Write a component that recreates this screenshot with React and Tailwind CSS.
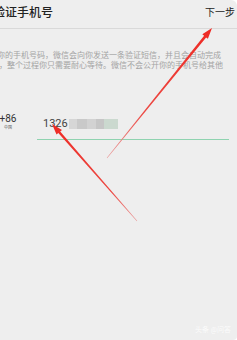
import React from 'react';

const cjk = { fontFamily: 'Roboto, "Noto Sans CJK SC", sans-serif' };

// tapered arrow polygon from tail to tip
const arrowPoints = (tail, tip) => {
  const dx = tip[0] - tail[0];
  const dy = tip[1] - tail[1];
  const len = Math.hypot(dx, dy);
  const ux = dx / len;
  const uy = dy / len;
  const nx = -uy;
  const ny = ux;
  const head = 11;
  const bx = tip[0] - ux * head;
  const by = tip[1] - uy * head;
  const p = (x, y, w) => `${(x + nx * w).toFixed(1)},${(y + ny * w).toFixed(1)}`;
  return [
    p(tail[0], tail[1], 0.3),
    p(bx, by, 1.3),
    p(bx, by, 3.6),
    `${tip[0]},${tip[1]}`,
    p(bx, by, -3.6),
    p(bx, by, -1.3),
    p(tail[0], tail[1], -0.3),
  ].join(' ');
};

const Arrows = () => (
  <svg className="absolute inset-0 pointer-events-none" width="237" height="340" viewBox="0 0 237 340">
    <defs>
      <linearGradient id="a1" gradientUnits="userSpaceOnUse" x1="107" y1="158" x2="212" y2="28">
        <stop offset="0" stopColor="#e9a0a0" />
        <stop offset="0.35" stopColor="#ec4a44" />
        <stop offset="1" stopColor="#ee2a24" />
      </linearGradient>
      <linearGradient id="a2" gradientUnits="userSpaceOnUse" x1="137" y1="221" x2="52" y2="124">
        <stop offset="0" stopColor="#e9a0a0" />
        <stop offset="0.3" stopColor="#ec4a44" />
        <stop offset="1" stopColor="#ee2a24" />
      </linearGradient>
    </defs>
    <polygon points={arrowPoints([107, 158], [212, 28])} fill="url(#a1)" />
    <polygon points={arrowPoints([137, 221], [52, 124])} fill="url(#a2)" />
  </svg>
);

export default function App() {
  return (
    <div className="w-[237px] h-[340px] bg-white">
      <div className="relative w-full h-full overflow-hidden bg-[#eeeeee] rounded-tr-[6px] rounded-br-[4px]" style={cjk}>
        {/* header */}
        <div className="flex items-center justify-between h-[29px] border-b border-[#d9d9d9] pb-[3px]">
          <span className="ml-[-7px] text-[12px] font-medium text-[#222] whitespace-nowrap">验证手机号</span>
          <span className="mr-[2px] text-[10px] text-[#222] whitespace-nowrap">下一步</span>
        </div>

        {/* description */}
        <div className="pt-[22px] text-[8px] leading-[9.5px] text-[#a3a3a3] whitespace-nowrap">
          <div className="ml-[-3px]">你的手机号码，微信会向你发送一条验证短信，并且会自动完成</div>
          <div className="ml-[-1px]">，整个过程你只需要耐心等待。微信不会公开你的手机号给其他</div>
        </div>

        {/* phone row */}
        <div className="flex items-start mt-[43px]">
          <div className="flex flex-col items-center w-[16px]">
            <span className="text-[10px] leading-[12px] text-[#333]">+86</span>
            <span className="text-[4px] leading-[6px] text-[#555]">中国</span>
          </div>
          <div className="flex flex-col ml-[27px] flex-1 mr-[8px]">
            <div className="flex items-center h-[12px] mt-[5px]">
              <span className="text-[11px] leading-[12px] text-[#444]">1326</span>
              <div className="flex h-[10px] ml-[1px]">
                <div className="w-[8px] bg-[#d6d6d6]" />
                <div className="w-[10px] bg-[#c9c9c9]" />
                <div className="w-[9px] bg-[#d2d2d2]" />
                <div className="w-[8px] bg-[#c6c6c6]" />
                <div className="w-[14px] bg-[#cbd9cf]" />
              </div>
            </div>
            <div className="h-px bg-[#8fd3b0] mt-[9px] ml-[-6px]" />
          </div>
        </div>

        {/* watermark */}
        <div className="absolute right-[6px] bottom-[5px] text-[7px] text-white opacity-80 whitespace-nowrap">头条 @问答</div>

        <Arrows />
      </div>
    </div>
  );
}
